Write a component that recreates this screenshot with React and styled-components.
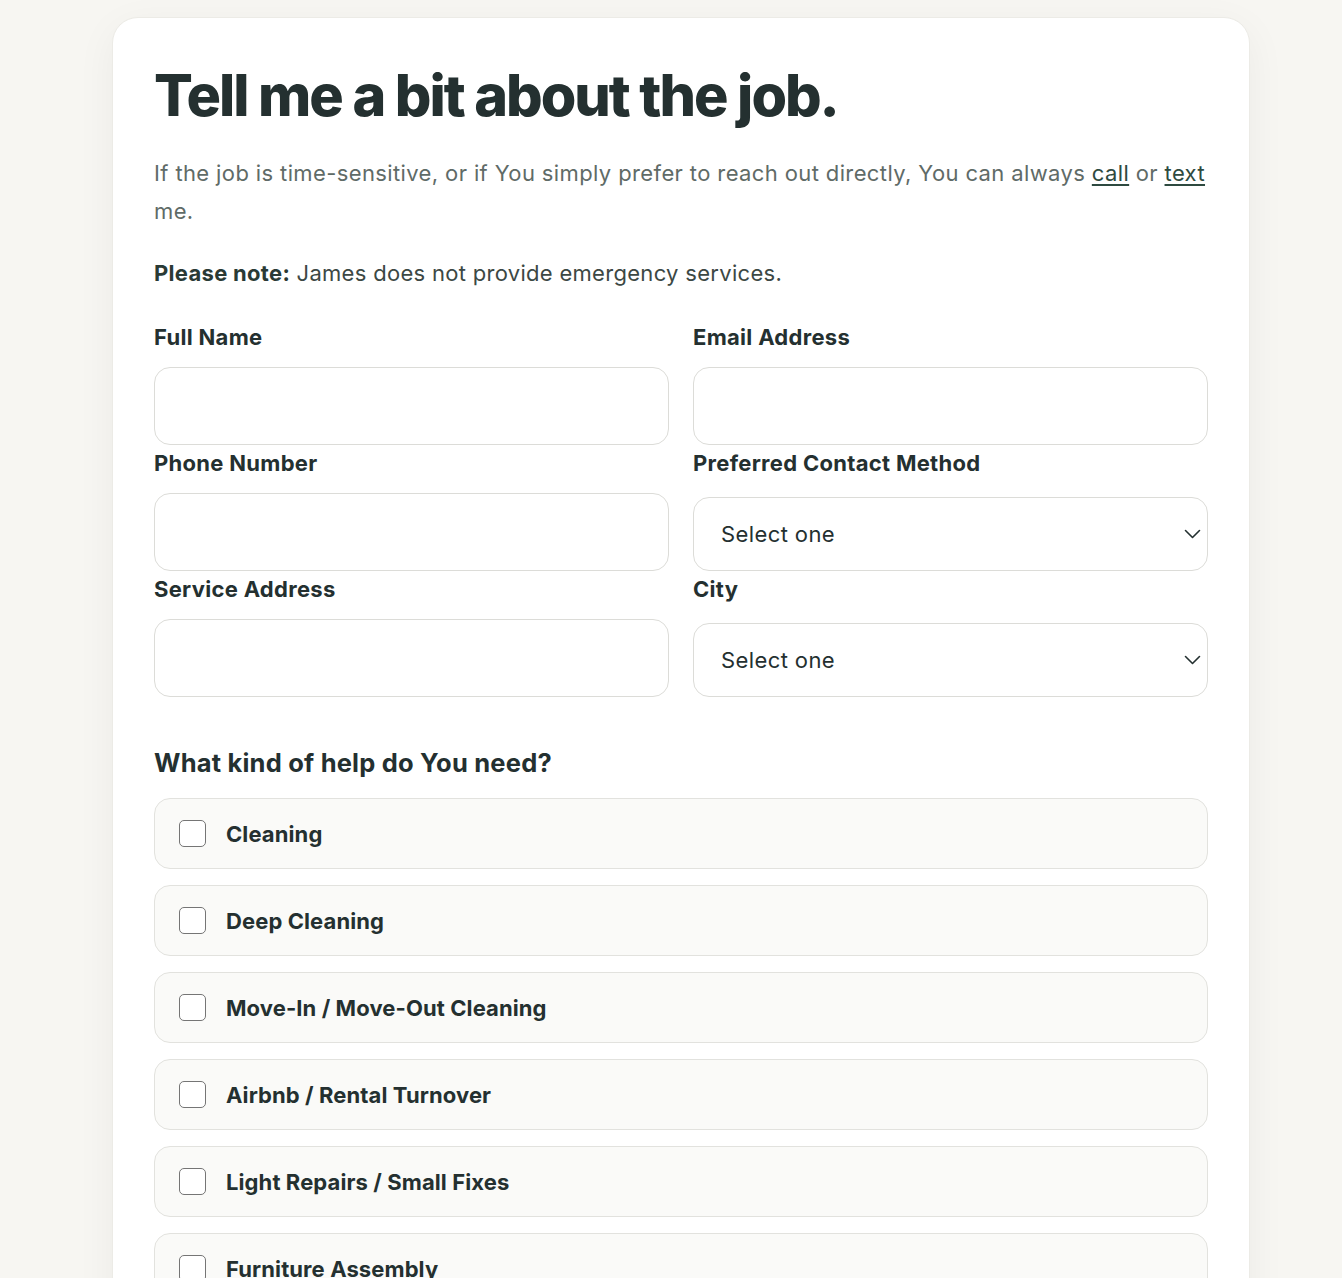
import styled, { createGlobalStyle } from "styled-components";

const GlobalStyle = createGlobalStyle`
  body {
    margin: 0;
    background: #f7f6f2;
    font-family: "Inter", "Liberation Sans", sans-serif;
    color: #243030;
  }
  * {
    box-sizing: border-box;
  }
`;

const Page = styled.div`
  display: flex;
  justify-content: center;
  padding: 17px 0 40px 20px;
`;

const Card = styled.div`
  width: 1138px;
  background: #ffffff;
  border: 1px solid #ecebe6;
  border-radius: 26px;
  box-shadow: 0 10px 40px rgba(40, 40, 30, 0.05);
  padding: 41px 41px 42px;
`;

const Title = styled.h1`
  margin: 0;
  font-size: 57.5px;
  line-height: 72px;
  font-weight: 800;
  letter-spacing: -0.035em;
  color: #243030;
`;

const Intro = styled.p`
  margin: 23px 0 0;
  font-size: 22px;
  line-height: 38px;
  letter-spacing: 0.38px;
  color: #5f6b67;
`;

const TextLink = styled.a`
  color: #2e4a40;
  text-decoration: underline;
  text-underline-offset: 3px;
`;

const Note = styled.p`
  margin: 27px 0 0;
  font-size: 22px;
  line-height: 32px;
  letter-spacing: 0.3px;
  color: #3c4844;
  strong {
    font-weight: 700;
    color: #2a3a35;
  }
`;

const FieldGrid = styled.div`
  display: grid;
  grid-template-columns: 1fr 1fr;
  column-gap: 24px;
  row-gap: 3px;
  margin-top: 33px;
`;

const Field = styled.label`
  display: flex;
  flex-direction: column;
`;

const Label = styled.span`
  font-size: 22px;
  line-height: 30px;
  font-weight: 700;
  letter-spacing: 0.3px;
  color: #243030;
  margin-bottom: 15px;
`;

const Input = styled.input`
  height: 78px;
  border: 1px solid #dcdcd8;
  border-radius: 16px;
  background: #fff;
  font: inherit;
  font-size: 22px;
  padding: 0 28px;
  outline: none;
`;

const SelectWrap = styled.div`
  position: relative;
  margin-top: 4px;
`;

const Select = styled.select`
  width: 100%;
  height: 74px;
  appearance: none;
  border: 1px solid #dcdcd8;
  border-radius: 16px;
  background: #fff;
  font-family: inherit;
  font-size: 22px;
  letter-spacing: 0.4px;
  color: #243030;
  padding: 0 50px 0 27px;
  outline: none;
`;

const Chevron = styled.svg`
  position: absolute;
  right: 7px;
  top: 50%;
  transform: translateY(-50%);
  pointer-events: none;
`;

const SectionTitle = styled.h2`
  margin: 50px 0 19px;
  font-size: 25.5px;
  line-height: 32px;
  font-weight: 700;
  letter-spacing: 0.2px;
  color: #243030;
`;

const Options = styled.div`
  display: flex;
  flex-direction: column;
  gap: 16px;
`;

const Option = styled.label`
  display: flex;
  align-items: center;
  gap: 20px;
  height: 71px;
  padding: 0 24px;
  background: #fafaf8;
  border: 1px solid #e2e2de;
  border-radius: 16px;
  font-size: 22px;
  font-weight: 700;
  letter-spacing: 0.1px;
  color: #243030;
`;

const Box = styled.span`
  width: 27px;
  height: 27px;
  border: 1.5px solid #757575;
  border-radius: 5px;
  background: #fff;
  flex-shrink: 0;
`;

const services = [
  "Cleaning",
  "Deep Cleaning",
  "Move-In / Move-Out Cleaning",
  "Airbnb / Rental Turnover",
  "Light Repairs / Small Fixes",
  "Furniture Assembly",
  "Yard Work",
];

const ArrowDown = () => (
  <Chevron width="17" height="10" viewBox="0 0 17 10" fill="none">
    <path d="M1.5 1.5L8.5 8.5L15.5 1.5" stroke="#243030" strokeWidth="1.6" strokeLinecap="round" strokeLinejoin="round" />
  </Chevron>
);

const TextField = ({ label }) => (
  <Field>
    <Label>{label}</Label>
    <Input type="text" />
  </Field>
);

const SelectField = ({ label }) => (
  <Field as="div">
    <Label>{label}</Label>
    <SelectWrap>
      <Select defaultValue="">
        <option value="">Select one</option>
      </Select>
      <ArrowDown />
    </SelectWrap>
  </Field>
);

export default function App() {
  return (
    <>
      <GlobalStyle />
      <Page>
        <Card>
          <Title>Tell me a bit about the job.</Title>
          <Intro>
            If the job is time-sensitive, or if You simply prefer to reach out directly, You can always{" "}
            <TextLink href="#">call</TextLink> or <TextLink href="#">text</TextLink> me.
          </Intro>
          <Note>
            <strong>Please note:</strong> James does not provide emergency services.
          </Note>
          <FieldGrid>
            <TextField label="Full Name" />
            <TextField label="Email Address" />
            <TextField label="Phone Number" />
            <SelectField label="Preferred Contact Method" />
            <TextField label="Service Address" />
            <SelectField label="City" />
          </FieldGrid>
          <SectionTitle>What kind of help do You need?</SectionTitle>
          <Options>
            {services.map((s) => (
              <Option key={s}>
                <Box />
                {s}
              </Option>
            ))}
          </Options>
        </Card>
      </Page>
    </>
  );
}
